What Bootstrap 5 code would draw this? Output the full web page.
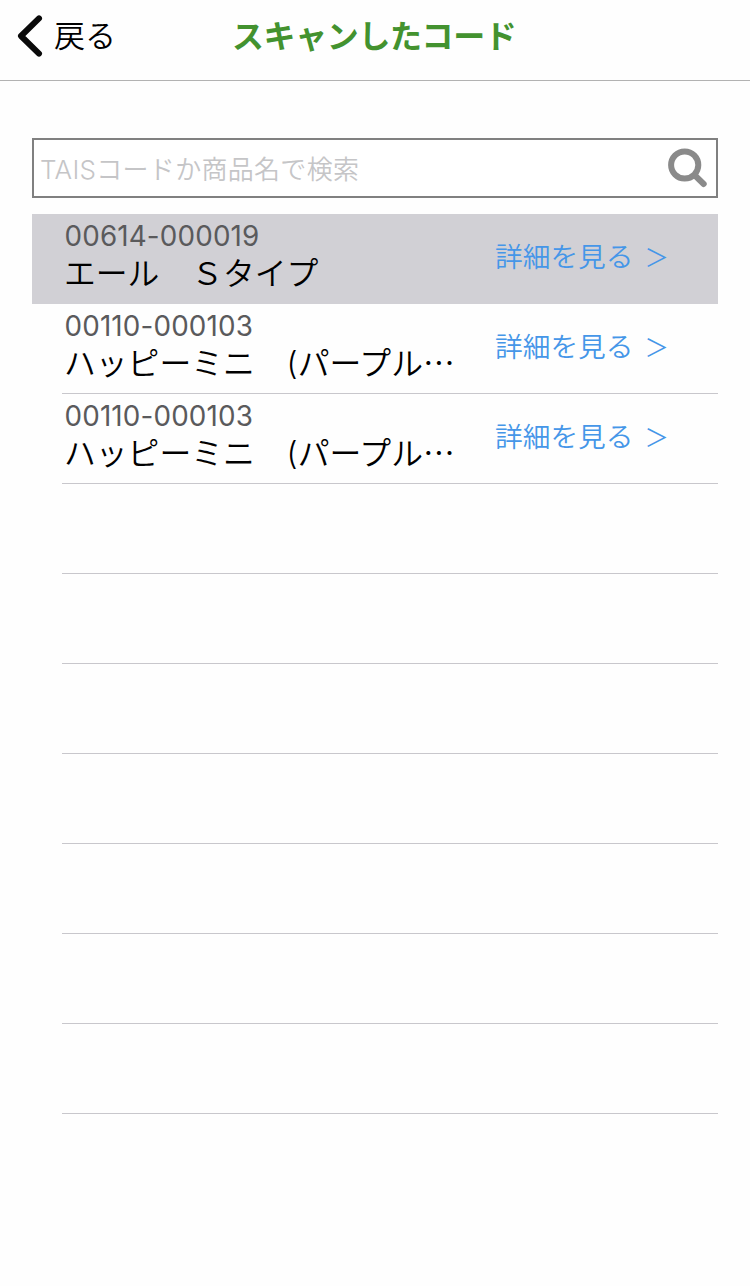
<!DOCTYPE html>
<html lang="ja">
<head>
<meta charset="utf-8">
<meta name="viewport" content="width=device-width, initial-scale=1">
<title>スキャンしたコード</title>
<link href="https://cdn.jsdelivr.net/npm/bootstrap@5.3.0/dist/css/bootstrap.min.css" rel="stylesheet">
<style>
body{font-family:Inter,"Noto Sans CJK JP",sans-serif;background:#fefefe;color:#000;min-height:1286px}
.topbar{height:81px;border-bottom:1px solid #b2b2b2;padding:0 0 8px 17px}
.back-link{width:215px;font-size:31px;line-height:40px;color:#000;font-weight:350}
.back-link svg{margin-right:11px}
.page-title{font-size:32px;line-height:40px;font-weight:700;color:#43922f;letter-spacing:-.4px;margin:0;padding-top:2px}
.page-body{padding:57px 32px 0}
.search-box{height:60px;border:2px solid #808080;padding:0 8px 0 6px;margin-bottom:16px;background:#fff}
.search-box input{font-size:26px;font-weight:350;line-height:40px;color:#000;padding:3px 0 0;letter-spacing:.3px}
.search-box input::placeholder{color:#c5c5c7;opacity:1}
.code-row{height:90px;position:relative;padding-left:32px}
.code-row::after{content:"";position:absolute;left:30px;right:0;bottom:0;height:1px;background:#c8c7cc}
.code-row.selected{background:#d1d0d5}
.code-row.selected::after{display:none}
.item-text{width:431px}
.item-code{font-size:27.8px;line-height:34px;color:#5a5a5c;padding-top:5px;padding-left:.5px;letter-spacing:.16px}
.item-name{font-size:31.8px;line-height:40px;white-space:pre;font-weight:350;padding-top:1px}
.detail-link{font-size:27.7px;line-height:40px;font-weight:350;color:#4596e8;padding-top:23px}
.detail-arrow{font-size:24.5px;margin-left:11px}
</style>
</head>
<body>
<header class="topbar d-flex align-items-center">
  <a class="back-link d-flex align-items-center text-decoration-none" href="#">
    <svg width="26" height="42" viewBox="0 0 26 42" fill="none" stroke="#0a0a0a" stroke-width="6" stroke-linecap="round" stroke-linejoin="round"><path d="M22 3.4 4 21l18 17.6"/></svg>戻る
  </a>
  <h1 class="page-title">スキャンしたコード</h1>
</header>
<main class="page-body">
  <form class="search-box d-flex align-items-center">
    <input class="form-control border-0 rounded-0 shadow-none bg-transparent" type="text" placeholder="TAISコードか商品名で検索" aria-label="検索">
    <svg class="flex-shrink-0" width="40" height="40" viewBox="0 0 40 40" fill="none" stroke="#8a8a8a" stroke-linecap="round"><circle cx="16.7" cy="17" r="13.6" stroke-width="6"/><path d="m27.5 28 8.2 8" stroke-width="6"/></svg>
  </form>
  <ul class="list-unstyled mb-0">
    <li class="code-row selected d-flex"><div class="item-text"><div class="item-code">00614-000019</div><div class="item-name">エール　Ｓタイプ</div></div><a class="detail-link text-decoration-none" href="#">詳細を見る<span class="detail-arrow">＞</span></a></li>
    <li class="code-row d-flex"><div class="item-text"><div class="item-code">00110-000103</div><div class="item-name">ハッピーミニ　(パープル⋯</div></div><a class="detail-link text-decoration-none" href="#">詳細を見る<span class="detail-arrow">＞</span></a></li>
    <li class="code-row d-flex"><div class="item-text"><div class="item-code">00110-000103</div><div class="item-name">ハッピーミニ　(パープル⋯</div></div><a class="detail-link text-decoration-none" href="#">詳細を見る<span class="detail-arrow">＞</span></a></li>
    <li class="code-row"></li>
    <li class="code-row"></li>
    <li class="code-row"></li>
    <li class="code-row"></li>
    <li class="code-row"></li>
    <li class="code-row"></li>
    <li class="code-row"></li>
  </ul>
</main>
<script src="https://cdn.jsdelivr.net/npm/bootstrap@5.3.0/dist/js/bootstrap.bundle.min.js"></script>
</body>
</html>
